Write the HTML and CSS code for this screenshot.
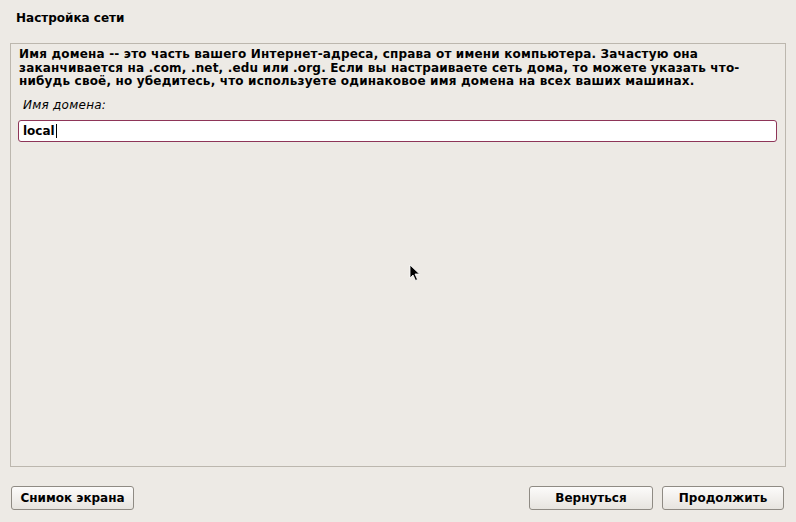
FILE: index.html
```html
<!DOCTYPE html>
<html lang="ru">
<head>
  <meta charset="UTF-8">
  <title>Настройка сети</title>
  <link rel="stylesheet" href="styles.css">
</head>
<body>
  <div class="header">Настройка сети</div>

  <div class="frame">
    <p class="description">Имя домена -- это часть вашего Интернет-адреса, справа от имени компьютера. Зачастую она заканчивается на .com, .net, .edu или .org. Если вы настраиваете сеть дома, то можете указать что-нибудь своё, но убедитесь, что используете одинаковое имя домена на всех ваших машинах.</p>
    <div class="field-label">Имя домена:</div>
    <div class="entry"><span class="entry-text">local</span><span class="caret"></span></div>
  </div>

  <div class="footer">
    <button class="btn btn-shot">Снимок экрана</button>
    <div class="spacer"></div>
    <button class="btn btn-back">Вернуться</button>
    <button class="btn btn-next">Продолжить</button>
  </div>

  <svg class="pointer" width="12" height="18" viewBox="0 0 12 18">
    <path d="M1 1 L1 14 L4 11 L6.5 16.5 L8.5 15.5 L6 10 L10.5 10 Z" fill="#000" stroke="#fff" stroke-width="0.8"/>
  </svg>
</body>
</html>
```

FILE: styles.css
```css
* {
  margin: 0;
  padding: 0;
  box-sizing: border-box;
}

body {
  font-family: "DejaVu Sans", "Liberation Sans", sans-serif;
  font-size: 12px;
  color: #000;
  background: #edeae5;
  width: 796px;
  height: 522px;
  display: flex;
  flex-direction: column;
  overflow: hidden;
  position: relative;
}

.header {
  font-weight: bold;
  line-height: 14px;
  padding: 11px 16px 0;
  height: 43px;
}

.frame {
  flex: 1;
  margin: 0 10px;
  border: 1px solid #bcb7ae;
  padding: 4px 8px 0 7px;
}

.description {
  font-weight: bold;
  line-height: 13.5px;
  letter-spacing: 0.18px;
  margin-left: 1px;
}

.field-label {
  font-style: italic;
  line-height: 14px;
  letter-spacing: 0.25px;
  margin: 9px 0 0 5px;
}

.entry {
  margin-top: 8px;
  height: 22px;
  background: #fff;
  border: 1px solid #8e3558;
  border-radius: 3px;
  padding-left: 4px;
  display: flex;
  align-items: center;
  font-weight: bold;
}

.caret {
  width: 1px;
  height: 14px;
  background: #000;
  margin-left: 1px;
}

.footer {
  display: flex;
  gap: 9px;
  padding: 19px 12px 12px 11px;
}

.spacer {
  flex: 1;
}

.btn {
  font-family: inherit;
  font-size: 12px;
  font-weight: bold;
  color: #000;
  height: 24px;
  border: 1px solid #8f8b84;
  border-radius: 3px;
  background: linear-gradient(#fcfbfa, #e7e4df);
}

.btn-shot { width: 123px; }
.btn-back { width: 124px; }
.btn-next { width: 122px; }

.pointer {
  position: absolute;
  left: 409px;
  top: 264px;
}
```
